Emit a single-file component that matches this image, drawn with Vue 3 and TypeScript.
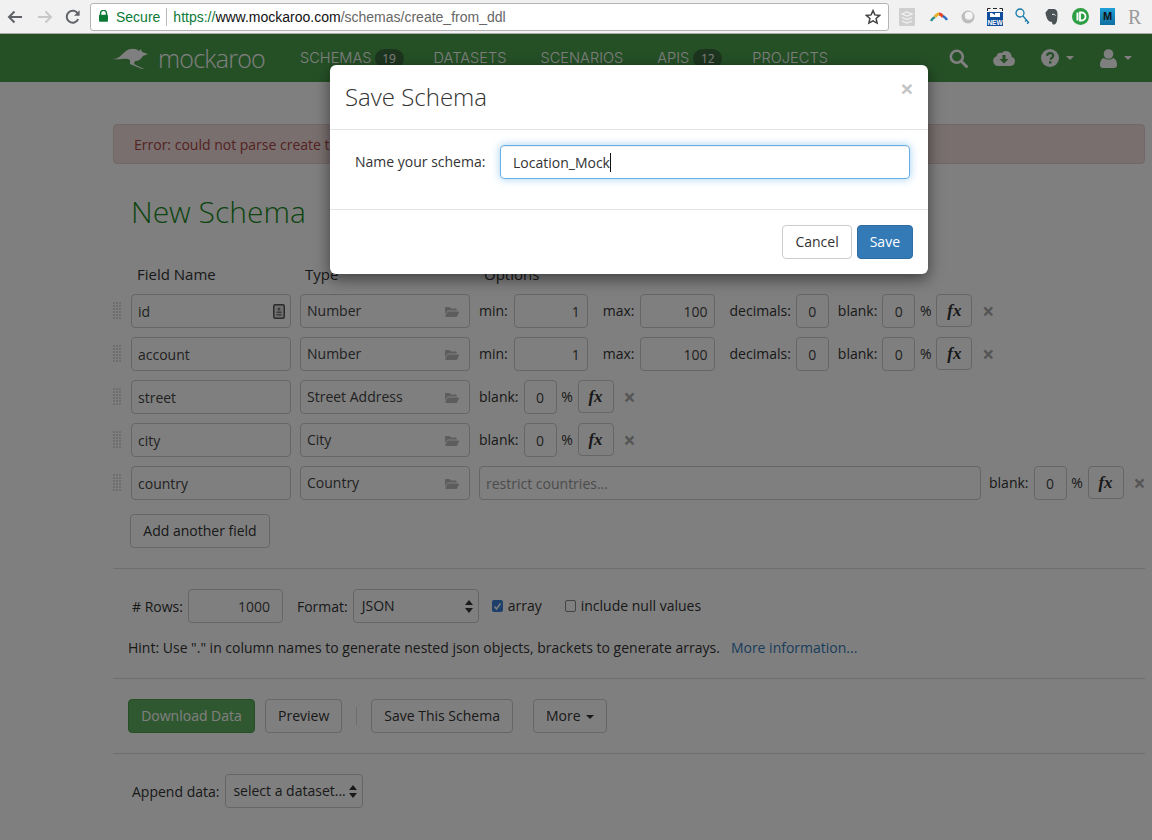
<script setup lang="ts">
interface Field {
  name: string
  type: string
  kind: 'number' | 'blank' | 'country'
  key?: boolean
}

const fields: Field[] = [
  { name: 'id', type: 'Number', kind: 'number', key: true },
  { name: 'account', type: 'Number', kind: 'number' },
  { name: 'street', type: 'Street Address', kind: 'blank' },
  { name: 'city', type: 'City', kind: 'blank' },
  { name: 'country', type: 'Country', kind: 'country' },
]

const folderPath =
  'M1 3.200C1 2.500 1.500 2 2.200 2h3.400l1.300 1.400h4.600c.7 0 1.200.5 1.200 1.200v.9H4.400c-.7 0-1.300.4-1.600 1L1 9.600V3.200zM4.200 6.600h10.200c.5 0 .8.5.6.9l-1.900 4c-.2.3-.5.5-.9.5H1.900c-.5 0-.8-.5-.6-.9l1.900-4c.2-.3.6-.5 1-.5z'
</script>

<template>
  <div class="screen">
    <header class="chrome">
      <svg class="tool back" width="16" height="14" viewBox="0 0 16 14"><path d="M15 7H2.500M7.500 1.500 2 7l5.500 5.500" fill="none" stroke="#5f6368" stroke-width="2" /></svg>
      <svg class="tool fwd" width="16" height="14" viewBox="0 0 16 14"><path d="M1 7h12.500M8.500 1.500 14 7l-5.500 5.500" fill="none" stroke="#c8c8c8" stroke-width="2" /></svg>
      <svg class="tool reload" width="16" height="16" viewBox="0 0 16 16"><path d="M13.200 10.200A6 6 0 1 1 13 4.800" fill="none" stroke="#5f6368" stroke-width="2" /><path d="M14.600 1.200v5.600H9z" fill="#5f6368" /></svg>
      <div class="urlbar">
        <svg class="lock" width="9" height="12" viewBox="0 0 9 12"><path d="M1.500 5V3.400a3 3 0 0 1 6 0V5" fill="none" stroke="#0b7a36" stroke-width="1.400" /><rect y="4.800" width="9" height="7" rx="1" fill="#0b7a36" /></svg>
        <span class="secure">Secure</span>
        <span class="url-sep"></span>
        <span class="url"><span class="scheme">https://</span><span class="host">www.mockaroo.com</span><span class="path">/schemas/create_from_ddl</span></span>
        <svg class="star" width="16" height="16" viewBox="0 0 16 16"><path d="m8 1.600 1.900 4.300 4.700.5-3.500 3.100 1 4.600L8 11.800l-4.100 2.300 1-4.600-3.500-3.100 4.700-.5z" fill="none" stroke="#444" stroke-width="1.500" /></svg>
      </div>
      <div class="extensions">
        <svg width="16" height="18" viewBox="0 0 16 18"><rect width="16" height="18" rx="1" fill="#cfcfcf" /><path d="m3 6 5-2 5 2-5 2zM3 9.500l5 2 5-2M3 13l5 2 5-2" fill="none" stroke="#f2f2f2" stroke-width="1.300" /></svg>
        <svg width="18" height="10" viewBox="0 0 18 10"><path d="M1 9c1-2 2-3 4-4" stroke="#2f8f8f" stroke-width="2.500" fill="none" /><path d="M5 5c1-1.500 3-3 4-3" stroke="#e8b026" stroke-width="3" fill="none" /><path d="M9 2c2 0 3 1 4 3" stroke="#e0452c" stroke-width="3" fill="none" /><path d="M13 4c1.500 1 3 2 4 4" stroke="#2d6fc0" stroke-width="2.500" fill="none" /></svg>
        <svg width="14" height="14" viewBox="0 0 14 14"><circle cx="7" cy="7" r="6.500" fill="#bdbdbd" /><circle cx="7.800" cy="5.800" r="4" fill="#f4f4f4" /></svg>
        <svg width="16" height="18" viewBox="0 0 16 18"><path d="M.5 3V.5h3M6 .5h4M12.500.5h3V3" fill="none" stroke="#222" /><rect y="4" width="16" height="14" fill="#0f4c9c" /><path d="M3 9V5h2l3 2V5h5v4z" fill="#fff" /><text x="8" y="16.500" class="new-text">NEW</text></svg>
        <svg width="15" height="17" viewBox="0 0 15 17"><circle cx="5" cy="5" r="4" fill="none" stroke="#1a7aa8" stroke-width="1.300" /><path d="m8 8 6 7M11.500 12l-1.500 1.500M13.500 14.300l-1.500 1.500" fill="none" stroke="#1a7aa8" stroke-width="1.300" /></svg>
        <svg width="13" height="17" viewBox="0 0 13 17"><path d="M3.500 1h5c2.500 0 4 1.500 4 5 0 5-.5 10-3 10.500-1.500.3-2.500-.5-2.500-2.500-2 0-4-1-5-3.500C1.500 8.500.5 7 .5 4.500L3.500 1z" fill="#4c5357" /><path d="M7 6.500c1.500-.5 3 0 3.500 1" stroke="#f1f1f1" fill="none" /></svg>
        <svg width="17" height="17" viewBox="0 0 17 17"><circle cx="8.500" cy="8.500" r="8.500" fill="#2e9e44" /><rect x="4.500" y="4.500" width="2" height="8" fill="#fff" /><path d="M8 4.500h1.500a4 4 0 0 1 0 8H8z" fill="none" stroke="#fff" stroke-width="1.800" /></svg>
        <span class="ext-m">M</span>
        <span class="ext-r">R</span>
      </div>
    </header>

    <div class="page">
      <nav class="navbar">
        <div class="brand">
          <svg class="roo" width="36" height="24" viewBox="0 0 36 24"><path d="M0 13C6 13 9 8 13 5c4-3 10-3 13 0l2-2 1 3 6 2-5 2c-2 3-4 5-8 5l-1 3 10 5h-2l-12-5v-4c-4-3-8 0-17-1z" fill="#fff" /></svg>
          <span class="wordmark">mockaroo</span>
        </div>
        <a class="nav-link first">SCHEMAS</a><span class="badge">19</span>
        <a class="nav-link datasets">DATASETS</a>
        <a class="nav-link scenarios">SCENARIOS</a>
        <a class="nav-link apis">APIS</a><span class="badge apis-badge">12</span>
        <a class="nav-link projects">PROJECTS</a>
        <div class="nav-icons">
          <svg width="19" height="19" viewBox="0 0 19 19"><circle cx="7.800" cy="7.800" r="6" fill="none" stroke="#fff" stroke-width="2.600" /><path d="m12.300 12.300 5.200 5.200" stroke="#fff" stroke-width="3" stroke-linecap="round" /></svg>
          <svg class="cloud" width="22" height="16" viewBox="0 0 22 16"><path d="M5 16a5 5 0 0 1-1.500-9.700A4.500 4.500 0 0 1 8.800 3 5.500 5.500 0 0 1 18.500 6.800 4.700 4.700 0 0 1 17.500 16z" fill="#fff" /><path d="M9.500 5h3v4h3L11 13.500 6.500 9h3z" fill="#4aa04c" /></svg>
          <svg class="help" width="18" height="18" viewBox="0 0 18 18"><circle cx="9" cy="9" r="9" fill="#fff" /><path d="M6 6.800C6.300 5 7.500 4.200 9.200 4.200c1.700 0 3 1 3 2.500 0 2.200-2.600 2.200-2.600 4" fill="none" stroke="#4aa04c" stroke-width="2.200" /><rect x="8" y="12.200" width="2.400" height="2.300" fill="#4aa04c" /></svg>
          <span class="caret light"></span>
          <svg class="user" width="17" height="19" viewBox="0 0 17 19"><circle cx="8.500" cy="5" r="4.800" fill="#fff" /><path d="M0 16c0-4 1.500-6.500 4-7 1.200 1 2.800 1.500 4.500 1.500S11.800 10 13 9c2.500.5 4 3 4 7 0 2-1.200 3-3 3H3c-1.800 0-3-1-3-3z" fill="#fff" /></svg>
          <span class="caret light"></span>
        </div>
      </nav>

      <main class="content">
        <div class="alert">Error: could not parse create table statement</div>
        <h1 class="title">New Schema</h1>

        <div class="col-heads">
          <span class="head-name">Field Name</span>
          <span class="head-type">Type</span>
          <span>Options</span>
        </div>

        <div v-for="field in fields" :key="field.name" class="field-row">
          <span class="grip"></span>
          <div class="name-wrap">
            <input class="ctl name-input" :value="field.name" readonly />
            <svg v-if="field.key" class="key-icon" width="12" height="15" viewBox="0 0 12 15"><rect x=".75" y=".75" width="10.500" height="13.500" rx="1.500" fill="#ddd" stroke="#555" stroke-width="1.500" /><circle cx="6" cy="5" r="1.500" fill="#777" /><rect x="3.500" y="7.500" width="5" height="1.500" fill="#777" /><rect x="3.500" y="10" width="5" height="1.500" fill="#777" /></svg>
          </div>
          <div class="ctl type-box">
            <span>{{ field.type }}</span>
            <svg width="16" height="14" viewBox="0 0 16 14"><path :d="folderPath" fill="#bbb" /></svg>
          </div>

          <template v-if="field.kind === 'number'">
            <label class="lbl first-opt">min:</label>
            <input class="ctl num min-input" value="1" readonly />
            <label class="lbl wide-gap">max:</label>
            <input class="ctl num max-input" value="100" readonly />
            <label class="lbl wide-gap">decimals:</label>
            <input class="ctl small" value="0" readonly />
            <label class="lbl blank-gap">blank:</label>
          </template>
          <template v-else-if="field.kind === 'blank'">
            <label class="lbl first-opt">blank:</label>
          </template>
          <template v-else>
            <input class="ctl restrict first-opt" placeholder="restrict countries..." readonly />
            <label class="lbl restrict-gap">blank:</label>
          </template>

          <input class="ctl small" value="0" readonly />
          <span class="pct">%</span>
          <button class="btn fx">fx</button>
          <span class="remove">×</span>
        </div>

        <button class="btn add-field">Add another field</button>
        <hr class="rule rule-a" />

        <div class="settings">
          <label class="lbl">#&nbsp;Rows:</label>
          <input class="ctl num rows-input" value="1000" readonly />
          <label class="lbl format-gap">Format:</label>
          <div class="ctl fake-select format">
            <span>JSON</span>
            <svg width="8" height="13" viewBox="0 0 8 13"><path d="M4 0 8 5H0zM4 13 0 8h8z" fill="#333" /></svg>
          </div>
          <span class="check on">
            <svg width="9" height="9" viewBox="0 0 9 9"><path d="m1.500 4.500 2 2.500 4-5.500" fill="none" stroke="#fff" stroke-width="1.400" /></svg>
          </span>
          <span class="check-text">array</span>
          <span class="check off"></span>
          <span class="check-text">include null values</span>
        </div>

        <p class="hint">Hint: Use "." in column names to generate nested json objects, brackets to generate arrays.<a class="more-info">More information...</a></p>
        <hr class="rule rule-b" />

        <div class="actions">
          <button class="btn success">Download Data</button>
          <button class="btn preview">Preview</button>
          <span class="action-sep"></span>
          <button class="btn">Save This Schema</button>
          <button class="btn more">More <span class="caret"></span></button>
        </div>
        <hr class="rule rule-c" />

        <div class="append">
          <label class="lbl append-label">Append data:</label>
          <div class="ctl fake-select dataset">
            <span>select a dataset...</span>
            <svg width="8" height="13" viewBox="0 0 8 13"><path d="M4 0 8 5H0zM4 13 0 8h8z" fill="#333" /></svg>
          </div>
        </div>
      </main>

      <div class="backdrop"></div>

      <section class="modal">
        <div class="modal-head">
          <h2>Save Schema</h2>
          <span class="modal-close">×</span>
        </div>
        <div class="modal-body">
          <label>Name your schema:</label>
          <div class="focus-input"><span class="typed">Location_Mock</span></div>
        </div>
        <div class="modal-foot">
          <button class="btn">Cancel</button>
          <button class="btn primary">Save</button>
        </div>
      </section>
    </div>
  </div>
</template>

<style>
html,
body {
  margin: 0;
  overflow: hidden;
}
</style>

<style scoped>
.screen {
  width: 1152px;
  height: 840px;
  overflow: hidden;
  background: #fff;
  color: #333;
  font: 14px/20px "Open Sans", sans-serif;
}

/* browser bar */
.chrome {
  display: flex;
  align-items: center;
  height: 33px;
  box-sizing: content-box;
  border-bottom: 1px solid #a8a8a8;
  background: #f1f1f1;
}
.tool {
  flex: none;
}
.back {
  margin-left: 7px;
}
.fwd {
  margin-left: 14px;
}
.reload {
  margin-left: 12px;
}
.urlbar {
  display: flex;
  align-items: center;
  box-sizing: border-box;
  width: 799px;
  height: 28px;
  margin-left: 9px;
  padding: 0 7px 0 8px;
  border: 1px solid #b4b4b4;
  border-radius: 3px;
  background: #fff;
  font: 14px "Liberation Sans", sans-serif;
}
.lock {
  margin-bottom: 2px;
}
.secure {
  margin-left: 8px;
  color: #0b7a36;
}
.url-sep {
  width: 1px;
  height: 18px;
  margin: 0 6px;
  background: #b8b8b8;
}
.url {
  flex: 1;
  white-space: nowrap;
}
.scheme {
  color: #0b7a36;
}
.host {
  color: #111;
}
.path {
  color: #666;
}
.extensions {
  display: flex;
  align-items: center;
  margin-left: 10px;
}
.extensions > * {
  flex: none;
}
.extensions > :nth-child(2) {
  margin-left: 15px;
}
.extensions > :nth-child(3) {
  margin-left: 13px;
}
.extensions > :nth-child(4) {
  margin-left: 12px;
}
.extensions > :nth-child(5) {
  margin-left: 12px;
}
.extensions > :nth-child(6) {
  margin-left: 15px;
}
.extensions > :nth-child(7) {
  margin-left: 14px;
}
.extensions > :nth-child(8) {
  margin-left: 11px;
}
.extensions > :nth-child(9) {
  margin-left: 13px;
}
.new-text {
  font: bold 6.500px "Liberation Sans", sans-serif;
  fill: #fff;
  text-anchor: middle;
}
.ext-m {
  width: 15px;
  height: 17px;
  background: linear-gradient(#1fa0d8, #0f6ea0);
  color: #111;
  font: bold 11px/17px "Liberation Sans", sans-serif;
  text-align: center;
}
.ext-r {
  color: #9a9a9a;
  font: 20px/20px "Liberation Serif", serif;
}

.page {
  position: relative;
  height: 806px;
}
.navbar {
  display: flex;
  align-items: center;
  height: 48px;
  padding: 0 20px 0 113px;
  background: #4aa04c;
  color: #fff;
}
.brand {
  display: flex;
  align-items: center;
  width: 187px;
}
.wordmark {
  margin-left: 9px;
  color: #fff;
  font: 300 25px/48px "Open Sans", sans-serif;
  letter-spacing: -0.75px;
}
.nav-link {
  font: 300 14.600px/20px Inter, sans-serif;
}
.badge {
  box-sizing: border-box;
  width: 29px;
  margin-left: 3px;
  border-radius: 10px;
  background: #3a6a3c;
  font-size: 12px;
  line-height: 19px;
  text-align: center;
}
.apis-badge {
  margin-left: 4px;
}
.datasets {
  margin-left: 30px;
}
.scenarios {
  margin-left: 34px;
}
.apis {
  margin-left: 34px;
}
.projects {
  margin-left: 30px;
}
.nav-icons {
  display: flex;
  align-items: center;
  margin-left: auto;
}
.cloud {
  margin-left: 25px;
}
.help {
  margin-left: 26px;
}
.user {
  margin-left: 26px;
}
.caret {
  display: inline-block;
  width: 0;
  height: 0;
  margin-left: 2px;
  border-top: 4px solid currentColor;
  border-right: 4px solid transparent;
  border-left: 4px solid transparent;
  vertical-align: middle;
}
.caret.light {
  margin-left: 7px;
}

.content {
  padding: 42px 7px 0 113px;
}
.alert {
  box-sizing: border-box;
  height: 40px;
  padding: 10px 20px;
  border: 1px solid #ebccd1;
  border-radius: 4px;
  background: #f2dede;
  color: #a94442;
}
.title {
  margin: 28px 0 0 18px;
  color: #188a1c;
  font: 300 30px/40px "Open Sans", sans-serif;
}
.col-heads {
  display: flex;
  margin: 32px 0 10px 24px;
  font-size: 15px;
}
.head-name {
  width: 168px;
}
.head-type {
  width: 179px;
}

.field-row {
  display: flex;
  align-items: flex-start;
  height: 34px;
  margin-bottom: 9px;
}
.grip {
  flex: none;
  width: 8px;
  height: 17px;
  margin: 8px 10px 0 0;
  background:
    repeating-linear-gradient(to right, transparent 0 2px, #fff 2px 3px),
    repeating-linear-gradient(to bottom, transparent 0 2px, #fff 2px 3px),
    #ddd;
}
.name-wrap {
  position: relative;
  flex: none;
  width: 160px;
}
.ctl {
  display: block;
  flex: none;
  box-sizing: border-box;
  height: 34px;
  padding: 6px;
  border: 1px solid #ccc;
  border-radius: 4px;
  outline: none;
  background: #fff;
  color: #444;
  font: 14px/20px "Open Sans", sans-serif;
}
.ctl::placeholder {
  color: #999;
}
.name-input {
  width: 100%;
}
.key-icon {
  position: absolute;
  top: 10px;
  right: 6px;
}
.type-box {
  display: flex;
  align-items: center;
  justify-content: space-between;
  width: 170px;
  margin-left: 9px;
  padding: 0 9px 0 6px;
}
.type-box svg {
  margin-top: 2px;
}
.lbl {
  flex: none;
  margin-right: 5px;
  line-height: 33px;
}
.first-opt {
  margin-left: 9px;
}
.wide-gap {
  margin-left: 15px;
}
.blank-gap {
  margin-left: 9px;
}
.restrict-gap {
  margin-left: 8px;
}
.num {
  padding-right: 7px;
  text-align: right;
}
.min-input {
  width: 74px;
  margin-left: 1px;
}
.max-input {
  width: 75px;
  padding-right: 6px;
}
.rows-input {
  width: 95px;
  padding-right: 12px;
}
.small {
  width: 33px;
  padding-right: 2px;
  padding-left: 2px;
  text-align: center;
}
.restrict {
  width: 502px;
}
.pct {
  flex: none;
  width: 21px;
  line-height: 33px;
  text-align: center;
}
.btn {
  flex: none;
  box-sizing: border-box;
  height: 34px;
  padding: 0 12px;
  border: 1px solid #ccc;
  border-radius: 4px;
  background: #fff;
  color: #333;
  font: 14px/20px "Open Sans", sans-serif;
}
.fx {
  width: 36px;
  height: 33px;
  padding: 0;
  font: italic bold 17px/30px "Liberation Serif", serif;
}
.remove {
  flex: none;
  width: 10px;
  margin-left: 10px;
  color: #aaa;
  font: bold 21px/34px "Open Sans", sans-serif;
  text-align: center;
}
.add-field {
  display: block;
  width: 140px;
  margin: 14px 0 0 17px;
}
.rule {
  height: 1px;
  margin: 0;
  border: 0;
  background: #ddd;
}
.rule-a {
  margin-top: 20px;
}
.settings {
  display: flex;
  align-items: center;
  margin: 20px 0 0 19px;
}
.format-gap {
  margin-left: 14px;
}
.fake-select {
  display: flex;
  align-items: center;
  justify-content: space-between;
  padding: 0 5px 0 8px;
  color: #333;
  white-space: nowrap;
}
.format {
  width: 126px;
}
.check {
  display: flex;
  flex: none;
  align-items: center;
  justify-content: center;
  box-sizing: border-box;
  width: 11px;
  height: 12px;
  border-radius: 2px;
}
.check.on {
  margin-left: 13px;
  background: #3a7fd5;
}
.check.off {
  margin-left: 23px;
  border: 1px solid #888;
  background: #fff;
}
.check-text {
  margin-left: 5px;
}
.hint {
  margin: 15px 0 0 15px;
}
.more-info {
  margin-left: 11px;
  color: #337ab7;
}
.rule-b {
  margin-top: 20px;
}
.actions {
  display: flex;
  align-items: center;
  margin: 20px 0 0 15px;
}
.success {
  width: 127px;
  border-color: #4aa04c;
  background: #5fb060;
  color: #fff;
}
.preview {
  margin-left: 10px;
}
.action-sep {
  width: 1px;
  height: 18px;
  margin: 0 14px;
  background: #ddd;
}
.more {
  margin-left: 20px;
}
.rule-c {
  margin-top: 20px;
}
.append {
  display: flex;
  align-items: center;
  margin: 20px 0 0 19px;
}
.append-label {
  margin-right: 6px;
}
.dataset {
  width: 138px;
  padding-left: 7px;
}

/* modal */
.backdrop {
  position: absolute;
  inset: 0;
  background: rgba(0, 0, 0, 0.5);
}
.modal {
  position: absolute;
  top: 31px;
  left: 330px;
  width: 598px;
  border-radius: 6px;
  background: #fff;
  box-shadow: 0 5px 15px rgba(0, 0, 0, 0.5);
}
.modal-head {
  position: relative;
  box-sizing: border-box;
  height: 65px;
  padding: 15px;
  border-bottom: 1px solid #e5e5e5;
}
.modal-head h2 {
  margin: 0;
  font: 300 24px/34px "Open Sans", sans-serif;
}
.modal-close {
  position: absolute;
  top: 12px;
  right: 15px;
  color: #c4c4c4;
  font: bold 21px/24px "Liberation Sans", sans-serif;
}
.modal-body {
  display: flex;
  box-sizing: border-box;
  height: 80px;
  padding: 15px 18px 0 25px;
  border-bottom: 1px solid #e5e5e5;
}
.modal-body label {
  width: 145px;
  line-height: 33px;
}
.focus-input {
  flex: 1;
  box-sizing: border-box;
  height: 34px;
  padding: 7px 12px 5px;
  border: 1px solid #66afe9;
  border-radius: 4px;
  box-shadow: inset 0 1px 1px rgba(0, 0, 0, 0.075), 0 0 8px rgba(102, 175, 233, 0.6);
  color: #333;
}
.typed {
  border-right: 1px solid #111;
}
.modal-foot {
  display: flex;
  justify-content: flex-end;
  gap: 5px;
  padding: 15px;
}
.primary {
  border-color: #2e6da4;
  background: #337ab7;
  color: #fff;
}
</style>
